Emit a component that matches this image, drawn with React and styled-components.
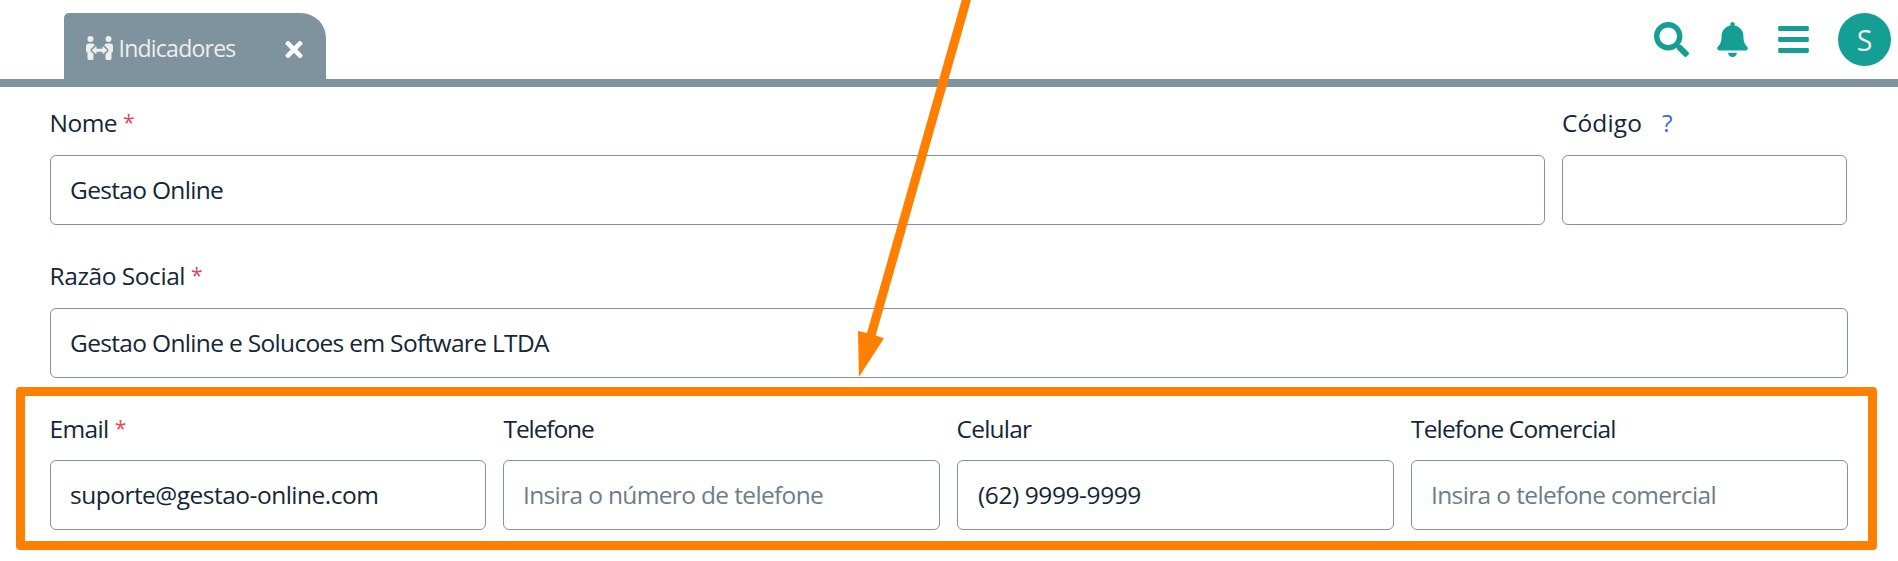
import React from "react";
import styled, { createGlobalStyle } from "styled-components";
import { FaSearch, FaBell, FaBars, FaTimes, FaPeopleArrows } from "react-icons/fa";

const GlobalStyle = createGlobalStyle`
  * { box-sizing: border-box; }
  body {
    margin: 0;
    background: #fff;
    color: #142637;
    font-family: "Open Sans", "Noto Sans", sans-serif;
    overflow: hidden;
  }
`;

const Page = styled.div`
  position: relative;
  height: 561px;
  overflow: hidden;
`;

const Header = styled.header`
  display: flex;
  align-items: flex-end;
  justify-content: space-between;
  height: 87px;
  padding: 0 7px 0 64px;
  border-bottom: 8px solid #7e939d;
`;

const Tab = styled.div`
  display: flex;
  align-items: center;
  width: 262px;
  height: 66px;
  padding: 0 23px 0 22px;
  border-radius: 5px 25px 0 0;
  background: #7e939d;
  color: #eee;
`;

const TabIcon = styled(FaPeopleArrows)`
  width: 27px;
  height: 24px;
  margin-top: 3px;
`;

const TabTitle = styled.span`
  flex: 1;
  margin: 4px 0 0 5.5px;
  font-size: 23px;
  letter-spacing: -0.76px;
`;

const CloseIcon = styled(FaTimes)`
  width: 18px;
  height: 25px;
  margin: 7px 0 0;
  color: #fff;
`;

const Actions = styled.nav`
  display: flex;
  align-items: center;
  gap: 26px;
  height: 79px;
  color: #149e94;
  svg {
    width: 35px;
    height: 35px;
  }
`;

const Avatar = styled.div`
  display: flex;
  align-items: center;
  justify-content: center;
  width: 53px;
  height: 53px;
  margin-left: 1px;
  padding-top: 2px;
  border-radius: 50%;
  background: #149e94;
  color: #eee;
  font-size: 28.5px;
  line-height: 1;
`;

const Form = styled.main`
  padding: 0 50px;
`;

const Row = styled.div`
  display: grid;
  grid-template-columns: ${(p) => p.$columns};
  column-gap: 17px;
  align-items: end;
  width: 1798px;
  height: ${(p) => p.$height}px;
`;

const Field = styled.label`
  display: flex;
  flex-direction: column;
  gap: ${(p) => p.$gap ?? 14}px;
  min-width: 0;
`;

const Caption = styled.span`
  margin-left: ${(p) => p.$shift ?? -0.4}px;
  font-size: 24.5px;
  line-height: 36px;
  letter-spacing: ${(p) => p.$spacing}px;
  white-space: nowrap;
`;

const Required = styled.span`
  margin-left: 6px;
  color: #e2475b;
  font-size: 21px;
  line-height: 0;
  vertical-align: 2px;
`;

const Help = styled.span`
  margin-left: 20px;
  color: #3d6bdc;
`;

const Input = styled.input`
  width: 100%;
  height: 70px;
  padding: 0 18px 1px 19px;
  border: 1px solid #8391a8;
  border-radius: 6px;
  outline: none;
  background: #fff;
  color: inherit;
  font-family: inherit;
  font-size: 24.5px;
  letter-spacing: ${(p) => p.$spacing ?? 0}px;
  text-indent: ${(p) => p.$indent ?? 0}px;
  &::placeholder {
    color: #6c7c8a;
    opacity: 1;
  }
`;

const Highlight = styled.div`
  position: absolute;
  left: 16px;
  top: 387px;
  width: 1861px;
  height: 163px;
  border: 9px solid #ff8000;
  border-radius: 4px;
  pointer-events: none;
`;

const Arrow = styled.svg`
  position: absolute;
  left: 850px;
  top: 0;
  pointer-events: none;
`;

function TextField({ label, spacing, shift, gap, required, help, ...input }) {
  return (
    <Field $gap={gap}>
      <Caption $spacing={spacing} $shift={shift}>
        {label}
        {required && <Required>*</Required>}
        {help && <Help>?</Help>}
      </Caption>
      <Input {...input} />
    </Field>
  );
}

export default function App() {
  return (
    <Page>
      <GlobalStyle />
      <Header>
        <Tab>
          <TabIcon />
          <TabTitle>Indicadores</TabTitle>
          <CloseIcon />
        </Tab>
        <Actions>
          <FaSearch />
          <FaBell />
          <FaBars />
          <Avatar>S</Avatar>
        </Actions>
      </Header>
      <Form>
        <Row $columns="1495px 285px" $height={138}>
          <TextField label="Nome" spacing={-0.57} required defaultValue="Gestao Online" $spacing={-0.68} />
          <TextField label="Código" spacing={0.1} shift={0} help />
        </Row>
        <Row $columns="1fr" $height={153}>
          <TextField
            label="Razão Social"
            spacing={-0.45}
            required
            defaultValue="Gestao Online e Solucoes em Software LTDA"
            $spacing={-0.67}
          />
        </Row>
        <Row $columns="436px repeat(3, 437px)" $height={152}>
          <TextField label="Email" spacing={-0.65} gap={13} required defaultValue="suporte@gestao-online.com" $spacing={-0.51} />
          <TextField label="Telefone" spacing={-1.1} shift={0.5} gap={13} placeholder="Insira o número de telefone" $spacing={-0.65} />
          <TextField label="Celular" spacing={-0.77} shift={-0.5} gap={13} defaultValue="(62) 9999-9999" $spacing={-0.42} $indent={1} />
          <TextField label="Telefone Comercial" spacing={-0.83} shift={0} gap={13} placeholder="Insira o telefone comercial" $spacing={-0.63} />
        </Row>
      </Form>
      <Highlight />
      <Arrow width="130" height="380" viewBox="850 0 130 380">
        <polygon fill="#ff8000" points="961.7,0 971,0 875.7,335.5 884,338.3 858.9,377 858,331 867,333" />
      </Arrow>
    </Page>
  );
}
